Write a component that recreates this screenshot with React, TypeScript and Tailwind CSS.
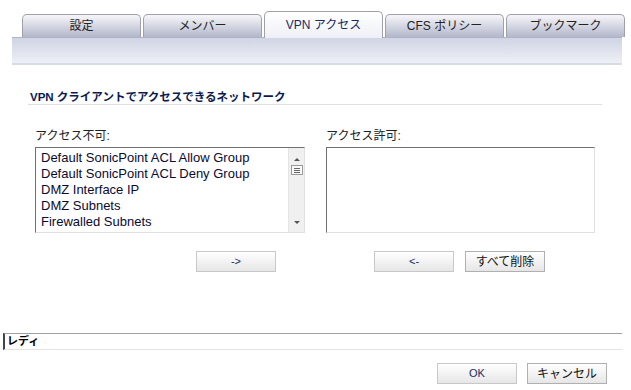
import React from 'react';

const tabs = ['設定', 'メンバー', 'VPN アクセス', 'CFS ポリシー', 'ブックマーク'];
const denied = [
  'Default SonicPoint ACL Allow Group',
  'Default SonicPoint ACL Deny Group',
  'DMZ Interface IP',
  'DMZ Subnets',
  'Firewalled Subnets',
];

const font = "font-['Liberation_Sans','Noto_Sans_CJK_JP',sans-serif]";

const Btn: React.FC<{ label: string; big?: boolean; className?: string }> = ({ label, big, className }) => (
  <button
    className={`h-[21px] w-[80px] border bg-gradient-to-b from-white to-[#e6e6e6] flex items-center justify-center leading-none ${
      big ? 'border-[#b0b0b0] text-[12px] text-[#111]' : 'border-[#c8c8c8] text-[11px] text-[#1c2a5a]'
    } ${className ?? ''}`}
  >
    {label}
  </button>
);

const App: React.FC = () => {
  return (
    <div className={`w-[631px] h-[390px] bg-white overflow-hidden ${font}`}>
      {/* Tabs */}
      <div className="flex items-end gap-[2px] pl-[22px] pt-[11px]">
        {tabs.map((t, i) =>
          i === 2 ? (
            <div
              key={t}
              className="w-[119px] h-[27px] rounded-t-[5px] border border-b-0 border-[#a0a0a8] bg-gradient-to-b from-white to-[#eef0f6] flex items-center justify-center text-[12px] text-[#1a2a60] -mb-px relative z-10"
            >
              {t}
            </div>
          ) : (
            <div
              key={t}
              className="w-[119px] h-[23px] rounded-t-[5px] border border-b-0 border-[#a0a0a8] bg-gradient-to-b from-[#f7f7fa] to-[#b3b7cb] flex items-center justify-center text-[12px] text-[#222]"
            >
              {t}
            </div>
          )
        )}
      </div>
      <div className="ml-[12px] w-[610px] h-[28px] border-t border-[#b0b3c2] border-b-2 border-b-[#d9dbe4] bg-gradient-to-b from-[#d0d4e4] to-[#eef0f6]" />

      {/* Heading */}
      <div className="ml-[28px] w-[574px] mt-[25px] border-b border-[#e0e0e0] pb-[1px] pl-[2px] leading-[12px]">
        <span className="text-[11.5px] font-bold text-[#0a1a50]">VPN クライアントでアクセスできるネットワーク</span>
      </div>

      {/* Lists */}
      <div className="flex mt-[24px] ml-[35px] gap-[21px]">
        <div className="flex flex-col">
          <span className="text-[12px] text-[#222] leading-[14px] mb-[4px]">アクセス不可:</span>
          <div className="w-[270px] h-[86px] border border-t-[#707070] border-l-[#707070] border-r-[#e0e0e0] border-b-[#e0e0e0] flex">
            <div className="flex-1 pl-[5px] pt-[2px]">
              {denied.map((d) => (
                <div key={d} className="text-[13px] leading-[16px] text-[#0a0a30] whitespace-nowrap">
                  {d}
                </div>
              ))}
            </div>
            <div className="w-[16px] bg-[#f0f0f0] border-l border-[#e4e4e4] flex flex-col items-center justify-between pt-[10px] pb-[8px]">
              <div className="flex flex-col items-center gap-[4px]">
                <div className="w-0 h-0 border-l-[3px] border-r-[3px] border-b-[3px] border-l-transparent border-r-transparent border-b-[#555]" />
                <div className="w-[12px] h-[10px] border border-[#9a9a9a] bg-[#f8f8f8] flex flex-col items-center justify-center gap-[1px]">
                  <div className="w-[6px] h-px bg-[#666]" />
                  <div className="w-[6px] h-px bg-[#666]" />
                  <div className="w-[6px] h-px bg-[#666]" />
                </div>
              </div>
              <div className="w-0 h-0 border-l-[3px] border-r-[3px] border-t-[3px] border-l-transparent border-r-transparent border-t-[#555]" />
            </div>
          </div>
        </div>
        <div className="flex flex-col">
          <span className="text-[12px] text-[#222] leading-[14px] mb-[4px]">アクセス許可:</span>
          <div className="w-[269px] h-[86px] border border-t-[#707070] border-l-[#707070] border-r-[#e0e0e0] border-b-[#e0e0e0]" />
        </div>
      </div>

      {/* Move buttons */}
      <div className="flex mt-[18px]">
        <Btn label="->" className="ml-[196px]" />
        <Btn label="<-" className="ml-[98px]" />
        <Btn label="すべて削除" big className="ml-[11px]" />
      </div>

      {/* Status */}
      <div className="ml-[3px] w-[619px] h-[17px] mt-[61px] border-t border-t-[#a0a0a0] border-l-2 border-l-[#444] border-b border-b-[#e4e4e4] flex items-center pl-[2px]">
        <span className="text-[11px] font-bold text-black leading-none">レディ</span>
      </div>

      {/* Footer buttons */}
      <div className="flex justify-end mt-[13px] pr-[24px] gap-[10px]">
        <Btn label="OK" />
        <Btn label="キャンセル" big />
      </div>
    </div>
  );
};

export default App;
